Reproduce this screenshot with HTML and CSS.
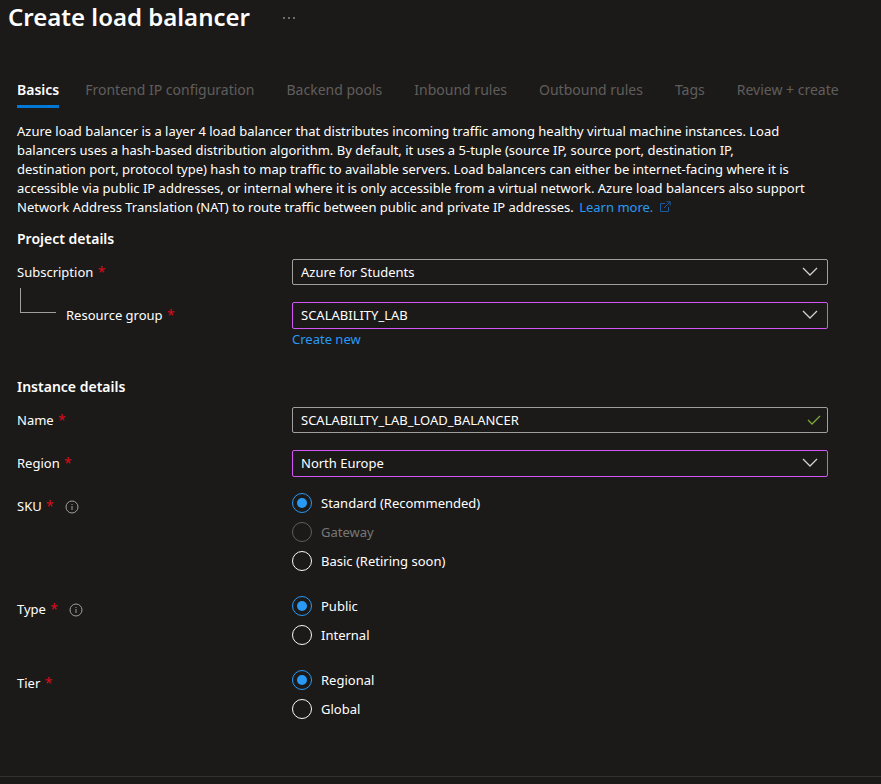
FILE: index.html
```html
<!DOCTYPE html>
<html lang="en">
<head>
<meta charset="utf-8">
<title>Create load balancer</title>
<link rel="stylesheet" href="styles.css">
</head>
<body>
<header class="page-header">
  <h1>Create load balancer</h1>
  <button class="more" type="button" aria-label="More actions">
    <svg width="14" height="4" viewBox="0 0 14 4" fill="#d8d6d4"><circle cx="2" cy="2" r=".8"/><circle cx="7" cy="2" r=".8"/><circle cx="12" cy="2" r=".8"/></svg>
  </button>
</header>
<nav class="tabs">
  <button class="tab active" type="button">Basics</button>
  <button class="tab" type="button">Frontend IP configuration</button>
  <button class="tab" type="button">Backend pools</button>
  <button class="tab" type="button">Inbound rules</button>
  <button class="tab" type="button">Outbound rules</button>
  <button class="tab" type="button">Tags</button>
  <button class="tab" type="button">Review + create</button>
</nav>
<main>
  <p class="intro">Azure load balancer is a layer 4 load balancer that distributes incoming traffic among healthy virtual machine instances. Load<br>
    balancers uses a hash-based distribution algorithm. By default, it uses a 5-tuple (source IP, source port, destination IP,<br>
    destination port, protocol type) hash to map traffic to available servers. Load balancers can either be internet-facing where it is<br>
    accessible via public IP addresses, or internal where it is only accessible from a virtual network. Azure load balancers also support<br>
    Network Address Translation (NAT) to route traffic between public and private IP addresses. <a class="learn" href="#">Learn more.
    <svg class="external" width="12" height="12" viewBox="0 0 12 12" fill="none" stroke="#1a5ca3"><path d="M6 2.5H1.5v8h8V6M7.5.8h3.7v3.7M11 1 5 7"/></svg></a></p>

  <form>
    <h2>Project details</h2>
    <div class="row">
      <label for="subscription">Subscription <span class="req">*</span></label>
      <div class="field">
        <select id="subscription"><option>Azure for Students</option></select>
        <svg class="chevron" width="16" height="10" viewBox="0 0 16 10" fill="none" stroke="#d2d0ce" stroke-width="1.3"><path d="m1 1 7 7 7-7"/></svg>
      </div>
    </div>
    <div class="row">
      <label class="child" for="group"><span class="branch"></span>Resource group <span class="req">*</span></label>
      <div>
        <div class="field edited">
          <select id="group"><option>SCALABILITY_LAB</option></select>
          <svg class="chevron" width="16" height="10" viewBox="0 0 16 10" fill="none" stroke="#d2d0ce" stroke-width="1.3"><path d="m1 1 7 7 7-7"/></svg>
        </div>
        <a class="create" href="#">Create new</a>
      </div>
    </div>

    <h2 class="second">Instance details</h2>
    <div class="row">
      <label for="name">Name <span class="req">*</span></label>
      <div class="field">
        <input id="name" type="text" value="SCALABILITY_LAB_LOAD_BALANCER">
        <svg class="check" width="14" height="10" viewBox="0 0 14 10" fill="none" stroke="#7fa83c" stroke-width="1.3"><path d="m1 5 4 4 8-8"/></svg>
      </div>
    </div>
    <div class="row">
      <label for="region">Region <span class="req">*</span></label>
      <div class="field edited">
        <select id="region"><option>North Europe</option></select>
        <svg class="chevron" width="16" height="10" viewBox="0 0 16 10" fill="none" stroke="#d2d0ce" stroke-width="1.3"><path d="m1 1 7 7 7-7"/></svg>
      </div>
    </div>
    <div class="choices">
      <div class="row" role="radiogroup" aria-labelledby="sku-label">
        <div class="label" id="sku-label">SKU <span class="req">*</span>
          <svg class="info" width="14" height="14" viewBox="0 0 14 14" fill="none" stroke="#a19f9d"><circle cx="7" cy="7" r="6"/><path d="M7 6v4M7 4v1"/></svg>
        </div>
        <div class="options">
          <label class="option"><input type="radio" name="sku" checked>Standard (Recommended)</label>
          <label class="option disabled"><input type="radio" name="sku" disabled>Gateway</label>
          <label class="option"><input type="radio" name="sku">Basic (Retiring soon)</label>
        </div>
      </div>
      <div class="row" role="radiogroup" aria-labelledby="type-label">
        <div class="label" id="type-label">Type <span class="req">*</span>
          <svg class="info" width="14" height="14" viewBox="0 0 14 14" fill="none" stroke="#a19f9d"><circle cx="7" cy="7" r="6"/><path d="M7 6v4M7 4v1"/></svg>
        </div>
        <div class="options">
          <label class="option"><input type="radio" name="type" checked>Public</label>
          <label class="option"><input type="radio" name="type">Internal</label>
        </div>
      </div>
      <div class="row" role="radiogroup" aria-labelledby="tier-label">
        <div class="label" id="tier-label">Tier <span class="req">*</span></div>
        <div class="options">
          <label class="option"><input type="radio" name="tier" checked>Regional</label>
          <label class="option"><input type="radio" name="tier">Global</label>
        </div>
      </div>
    </div>
  </form>
</main>
<footer></footer>
</body>
</html>
```
FILE: styles.css
```css
* { box-sizing: border-box; }
body {
  margin: 0;
  min-height: 100vh;
  display: flex;
  flex-direction: column;
  background: #1b1a19;
  color: #fff;
  font: 13px/19px "Noto Sans", "Open Sans", sans-serif;
}
button, input, select { font: inherit; color: inherit; }
button { background: none; border: 0; padding: 0; }
a { color: #2899f5; text-decoration: none; }
h1, h2, p { margin: 0; }

.page-header { display: flex; align-items: center; gap: 32px; height: 34px; padding-left: 8px; }
h1 { font-size: 24px; line-height: 34px; font-weight: 600; }
.more { display: flex; padding-top: 2px; }

.tabs { display: flex; gap: 32px; margin-top: 44px; padding-left: 17px; white-space: nowrap; }
.tab { height: 30px; padding-bottom: 5px; border-bottom: 3px solid transparent; font-size: 14px; color: #605e5c; }
.tab.active { margin-right: -6px; color: #fff; font-weight: 600; border-color: #0078d4; }

main { flex: 1; padding: 14px 53px 40px 17px; }
.intro { white-space: nowrap; }
.learn { margin-left: 2px; }
.external { margin-left: 2px; vertical-align: -1px; }

h2 { margin: 12px 0 10px; font-size: 14px; line-height: 20px; font-weight: 600; }
h2.second { margin-top: 28px; }

.row { display: grid; grid-template-columns: 275px minmax(0, 1fr); align-items: start; margin-bottom: 17px; }
.row > label, .label { line-height: 26px; }
.child { position: relative; padding-left: 49px; }
.branch { position: absolute; left: 3px; top: -14px; width: 36px; height: 25px; border: solid #a19f9d; border-width: 0 0 1px 1px; }
.req { margin-left: 1px; color: #e00b1c; font-family: "Open Sans", sans-serif; font-size: 14px; }
.info { margin-left: 8px; vertical-align: -3px; }

.field { position: relative; height: 26px; border: 1px solid #a19f9d; border-radius: 2px; }
.field.edited { height: 27px; border-color: #d455f5; }
.field select, .field input {
  display: block;
  width: 100%;
  height: 100%;
  margin: 0;
  padding: 0 32px 0 8px;
  border: 0;
  outline: 0;
  background: none;
  appearance: none;
}
.chevron, .check { position: absolute; top: 7px; right: 9px; pointer-events: none; }
.check { right: 6px; }
.create { display: block; line-height: 20px; }

.choices { display: grid; gap: 25px; margin-top: -1px; }
.choices .row { margin-bottom: 0; }
.options { display: grid; gap: 9px; }
.option { display: flex; align-items: center; gap: 9px; line-height: 20px; }
.option input {
  appearance: none;
  display: grid;
  place-items: center;
  width: 20px;
  height: 20px;
  margin: 0;
  border: 1px solid #faf9f8;
  border-radius: 50%;
}
.option input:checked { border-color: #2899f5; }
.option input:checked::before { content: ""; width: 10px; height: 10px; border-radius: 50%; background: #2899f5; }
.option.disabled { color: #797775; }
.option input:disabled { border-color: #605e5c; }

footer { height: 8px; border-top: 1px solid #323130; }
```
